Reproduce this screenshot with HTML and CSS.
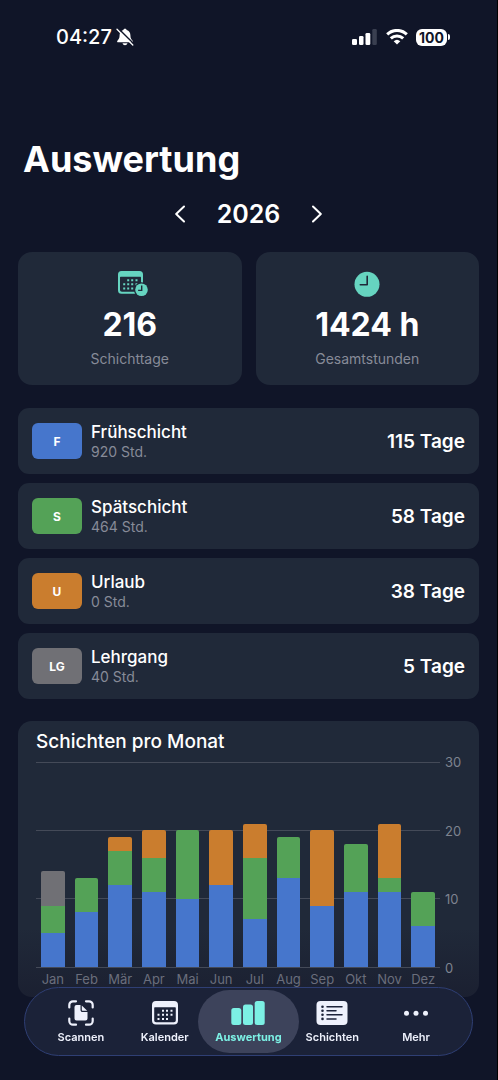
FILE: index.html
```html
<!DOCTYPE html>
<html lang="de">
<head>
<meta charset="utf-8">
<meta name="viewport" content="width=device-width, initial-scale=1">
<title>Auswertung</title>
<link rel="stylesheet" href="styles.css">
</head>
<body>
<div class="status">
  <div class="status-left">
    <span>04:27</span>
    <svg width="18" height="18" viewBox="0 0 18 18"><path d="M9 .8c.9 0 1.500.5 1.600 1.200C13.200 2.800 14.400 4.800 14.400 7.300c0 3.200.9 4 2 5.200.9 1 .5 1.800-.5 1.800H2.100c-1 0-1.400-.8-.5-1.800 1.100-1.200 2-2 2-5.200 0-2.500 1.200-4.500 3.800-5.300C7.500 1.300 8.100.8 9 .8zM6.500 15.300h5c-.4 1.200-1.300 1.900-2.500 1.900s-2.100-.7-2.500-1.900z" fill="#fff"/><path d="M2.400.6 18 16" stroke="#101528" stroke-width="1.500"/><path d="M1 1.200 16.800 17" stroke="#fff" stroke-width="1.300" stroke-linecap="round"/></svg>
  </div>
  <div class="status-right">
    <svg width="26" height="16" viewBox="0 0 26 16" fill="#fff"><rect x="0" y="10" width="5" height="6" rx="1.300"/><rect x="7" y="7" width="4.500" height="9" rx="1.300"/><rect x="13.500" y="4" width="4.800" height="12" rx="1.300"/><rect x="20.300" y="0" width="4.500" height="16" rx="1.300" fill="#3a3f50"/></svg>
    <svg width="22" height="16" viewBox="0 0 22 16" fill="none" stroke="#fff" stroke-width="3"><path d="M1.200 5.400a14 14 0 0 1 19.600 0"/><path d="M4.800 9.400a8.900 8.900 0 0 1 12.400 0"/><path d="M11 15.600 7.700 12.200a4.800 4.800 0 0 1 6.600 0z" fill="#fff" stroke="none"/></svg>
    <div class="battery"><span class="battery-level">100</span><span class="battery-tip"></span></div>
  </div>
</div>
<main class="page">
  <h1 class="title">Auswertung</h1>
  <div class="year">
    <button class="year-step" aria-label="Vorheriges Jahr"><svg width="10" height="18" viewBox="0 0 10 18"><path d="M9 1.500 1.200 9 9 16.500"/></svg></button>
    <span class="year-value">2026</span>
    <button class="year-step" aria-label="Nächstes Jahr"><svg width="10" height="18" viewBox="0 0 10 18"><path d="M1 1.500 8.800 9 1 16.500"/></svg></button>
  </div>
  <section class="stats">
    <div class="stat">
      <svg width="36" height="26" viewBox="-6 0 36 26"><path fill="#66d4c0" fill-rule="evenodd" d="M3.500 0h18A3.500 3.500 0 0 1 25 3.500v15.700a3.500 3.500 0 0 1-3.500 3.500h-18A3.500 3.500 0 0 1 0 19.200V3.500A3.500 3.500 0 0 1 3.500 0zM2 6.800v12c0 1.300.7 2 2 2h17c1.300 0 2-.7 2-2v-12c0-.7-.3-1-1-1H3c-.7 0-1 .3-1 1z"/><path fill="#66d4c0" d="M9.200 8.300h2v2h-2zM13.200 8.300h2v2h-2zM17.500 8.300h2v2h-2zM5.200 12.300h2v2h-2zM9.200 12.300h2v2h-2zM13.200 12.300h2v2h-2zM17.500 12.300h2v2h-2zM5.200 16.500h2v2h-2zM9.200 16.500h2v2h-2zM13.200 16.500h2v2h-2z"/><circle cx="23.500" cy="18.800" r="7.500" fill="#202939"/><circle cx="23.500" cy="18.800" r="6.300" fill="#66d4c0"/><path d="M23.700 14.600v4.800h-3.600" fill="none" stroke="#202939" stroke-width="1.400"/></svg>
      <strong class="stat-value">216</strong>
      <span class="stat-label">Schichttage</span>
    </div>
    <div class="stat">
      <svg width="26" height="26" viewBox="0 0 26 26"><circle cx="13" cy="13.300" r="12.500" fill="#66d4c0"/><path d="M13.200 5.200v8.500H6.300" fill="none" stroke="#202939" stroke-width="1.600" stroke-linecap="round" stroke-linejoin="round"/></svg>
      <strong class="stat-value">1424 h</strong>
      <span class="stat-label">Gesamtstunden</span>
    </div>
  </section>
  <section class="shifts">
    <div class="shift"><span class="tag early">F</span><div class="shift-text"><span class="shift-name">Frühschicht</span><span class="shift-hours">920 Std.</span></div><span class="shift-days">115 Tage</span></div>
    <div class="shift"><span class="tag late">S</span><div class="shift-text"><span class="shift-name">Spätschicht</span><span class="shift-hours">464 Std.</span></div><span class="shift-days">58 Tage</span></div>
    <div class="shift"><span class="tag leave">U</span><div class="shift-text"><span class="shift-name">Urlaub</span><span class="shift-hours">0 Std.</span></div><span class="shift-days">38 Tage</span></div>
    <div class="shift"><span class="tag course">LG</span><div class="shift-text"><span class="shift-name">Lehrgang</span><span class="shift-hours">40 Std.</span></div><span class="shift-days">5 Tage</span></div>
  </section>
  <section class="chart-card">
    <h2 class="chart-title">Schichten pro Monat</h2>
    <div class="chart">
      <div class="plot">
        <div class="bar"><i class="course" style="height:16.667%"></i><i class="late" style="height:13.333%"></i><i class="early" style="height:16.667%"></i></div>
        <div class="bar"><i class="late" style="height:16.667%"></i><i class="early" style="height:26.667%"></i></div>
        <div class="bar"><i class="leave" style="height:6.667%"></i><i class="late" style="height:16.667%"></i><i class="early" style="height:40%"></i></div>
        <div class="bar"><i class="leave" style="height:13.333%"></i><i class="late" style="height:16.667%"></i><i class="early" style="height:36.667%"></i></div>
        <div class="bar"><i class="late" style="height:33.333%"></i><i class="early" style="height:33.333%"></i></div>
        <div class="bar"><i class="leave" style="height:26.667%"></i><i class="early" style="height:40%"></i></div>
        <div class="bar"><i class="leave" style="height:16.667%"></i><i class="late" style="height:30%"></i><i class="early" style="height:23.333%"></i></div>
        <div class="bar"><i class="late" style="height:20%"></i><i class="early" style="height:43.333%"></i></div>
        <div class="bar"><i class="leave" style="height:36.667%"></i><i class="early" style="height:30%"></i></div>
        <div class="bar"><i class="late" style="height:23.333%"></i><i class="early" style="height:36.667%"></i></div>
        <div class="bar"><i class="leave" style="height:26.667%"></i><i class="late" style="height:6.667%"></i><i class="early" style="height:36.667%"></i></div>
        <div class="bar"><i class="late" style="height:16.667%"></i><i class="early" style="height:20%"></i></div>
      </div>
      <div class="scale"><span>30</span><span>20</span><span>10</span><span>0</span></div>
      <div class="months"><span>Jan</span><span>Feb</span><span>Mär</span><span>Apr</span><span>Mai</span><span>Jun</span><span>Jul</span><span>Aug</span><span>Sep</span><span>Okt</span><span>Nov</span><span>Dez</span></div>
    </div>
  </section>
</main>
<nav class="tabs">
  <a class="tab" href="#scannen"><svg width="26" height="26" viewBox="0 0 26 26"><path d="M1.300 7.500V5a3.700 3.700 0 0 1 3.700-3.700h3M18 1.300h3A3.700 3.700 0 0 1 24.700 5v2.500M24.700 18.500V21a3.700 3.700 0 0 1-3.700 3.700h-3M8 24.700H5A3.700 3.700 0 0 1 1.300 21v-2.500" fill="none" stroke="#eef1fc" stroke-width="2.200" stroke-linecap="round"/><path d="M8.500 5h4v4.800c0 1.500.8 2.300 2.300 2.300h4.700v6.400a2 2 0 0 1-2 2H8.500a2 2 0 0 1-2-2V7a2 2 0 0 1 2-2zM13.800 5.400l5.400 5.400h-4.400c-.7 0-1-.3-1-1z" fill="#eef1fc"/></svg><span>Scannen</span></a>
  <a class="tab" href="#kalender"><svg width="26" height="26" viewBox="0 0 26 26"><path fill="#eef1fc" fill-rule="evenodd" d="M4 1h18a4 4 0 0 1 4 4v15.500a4 4 0 0 1-4 4H4a4 4 0 0 1-4-4V5a4 4 0 0 1 4-4zM2.200 8.200v12c0 1.300.7 2 2 2h17.600c1.300 0 2-.7 2-2v-12c0-.7-.3-1-1-1H3.200c-.7 0-1 .3-1 1z"/><path fill="#eef1fc" d="M10 9.700h2v2h-2zM14 9.700h2v2h-2zM18.500 9.700h2v2h-2zM5.500 13.700h2v2h-2zM10 13.700h2v2h-2zM14 13.700h2v2h-2zM18.500 13.700h2v2h-2zM5.500 17.900h2v2h-2zM10 17.900h2v2h-2zM14 17.900h2v2h-2z"/></svg><span>Kalender</span></a>
  <a class="tab active" href="#auswertung" aria-current="page"><svg width="34" height="26" viewBox="0 0 34 26" fill="#7cf0e4"><rect x=".3" y="8" width="10" height="17" rx="2.500"/><rect x="12" y="4.500" width="10" height="20.500" rx="2.500"/><rect x="23.700" y="1" width="10" height="24" rx="2.500"/></svg><span>Auswertung</span></a>
  <a class="tab" href="#schichten"><svg width="32" height="26" viewBox="0 0 32 26"><rect x=".5" y="1" width="31" height="24" rx="4" fill="#eef1fc"/><g stroke="#1c233a" stroke-width="1.500" stroke-linecap="round"><path d="M11 6.700h15M11 10.700h9M11 14.700h15M11 18.900h9"/></g><g fill="#1c233a"><circle cx="6.500" cy="6.700" r="1.300"/><circle cx="6.500" cy="10.700" r="1.300"/><circle cx="6.500" cy="14.700" r="1.300"/><circle cx="6.500" cy="18.900" r="1.300"/></g></svg><span>Schichten</span></a>
  <a class="tab" href="#mehr"><svg width="26" height="26" viewBox="0 0 26 26" fill="#eef1fc"><circle cx="3.500" cy="13.300" r="2.500"/><circle cx="13" cy="13.300" r="2.500"/><circle cx="22.500" cy="13.300" r="2.500"/></svg><span>Mehr</span></a>
</nav>
</body>
</html>
```
FILE: styles.css
```css
* { box-sizing: border-box; }
body {
  margin: 0;
  min-height: 100vh;
  background: #101528;
  border-right: 1px solid #000;
  color: #fff;
  font-family: Inter, "Liberation Sans", sans-serif;
}
svg { display: block; flex: none; }
.early { background: #4676cc; }
.late { background: #54a257; }
.leave { background: #ca7d2e; }
.course { background: #707075; }

.status {
  display: flex;
  justify-content: space-between;
  align-items: center;
  height: 74px;
  padding: 0 47px 0 56px;
}
.status-left { display: flex; align-items: center; gap: 4px; font-size: 20px; font-weight: 500; }
.status-right { display: flex; align-items: center; gap: 8px; }
.battery { display: flex; align-items: center; gap: 1px; }
.battery-level {
  padding: 0 3px;
  border-radius: 6px;
  background: #fff;
  color: #101528;
  font-size: 14px;
  font-weight: 700;
  line-height: 17px;
}
.battery-tip { width: 2px; height: 6px; border-radius: 0 2px 2px 0; background: #fff; }

.page { padding: 61px 18px 83px; }
.title { margin: 0 5px; font-size: 36px; line-height: 48px; font-weight: 700; }
.year { display: flex; justify-content: center; align-items: center; gap: 21px; height: 62px; }
.year-step { display: grid; place-items: center; width: 32px; height: 32px; padding: 0; border: 0; background: none; }
.year-step path { fill: none; stroke: #fff; stroke-width: 2; stroke-linecap: round; stroke-linejoin: round; }
.year-value { font-size: 25px; font-weight: 600; }

.stats { display: grid; grid-template-columns: 1fr 1fr; gap: 14px; margin-top: 7px; }
.stat {
  display: flex;
  flex-direction: column;
  align-items: center;
  padding: 19px 8px 15px;
  border-radius: 14px;
  background: #202939;
}
.stat-value { margin-top: 8px; font-size: 32px; line-height: 40px; font-weight: 700; }
.stat-label { margin-top: 3px; color: #878b98; font-size: 14px; line-height: 22px; }

.shifts { display: flex; flex-direction: column; gap: 9px; margin-top: 23px; }
.shift {
  display: flex;
  align-items: center;
  gap: 9px;
  height: 66px;
  padding: 0 14px;
  border-radius: 11px;
  background: #202939;
}
.tag { display: grid; place-items: center; width: 50px; height: 36px; border-radius: 6px; font-size: 12px; font-weight: 700; }
.shift-text { display: flex; flex: 1; flex-direction: column; }
.shift-name { font-size: 17px; line-height: 22px; font-weight: 500; }
.shift-hours { color: #878b98; font-size: 14px; line-height: 18px; }
.shift-days { font-size: 19px; font-weight: 600; }

.chart-card { margin-top: 22px; padding: 9px 18px; border-radius: 14px; background: linear-gradient(#202939 75%, #1b2031); }
.chart-title { margin: 0; font-size: 19px; line-height: 24px; font-weight: 500; }
.chart { display: grid; grid-template-columns: 1fr 16px; gap: 0 5px; margin-top: 8px; }
.plot {
  display: grid;
  grid-template-columns: repeat(12, 1fr);
  justify-items: center;
  height: 206px;
  border-bottom: 1px solid #444a58;
  background:
    linear-gradient(#444a58, #444a58) 0 0 / 100% 1px no-repeat,
    linear-gradient(#444a58, #444a58) 0 33.333% / 100% 1px no-repeat,
    linear-gradient(#444a58, #444a58) 0 66.667% / 100% 1px no-repeat;
}
.bar { display: flex; flex-direction: column; justify-content: flex-end; width: 71%; height: 100%; }
.bar i:first-child { border-radius: 2px 2px 0 0; }
.scale { display: flex; flex-direction: column; justify-content: space-between; margin: -8px 0; color: #7e8390; font-size: 13px; line-height: 16px; }
.months { display: grid; grid-template-columns: repeat(12, 1fr); padding-top: 2px; color: #6a6e7c; font-size: 13px; line-height: 18px; text-align: center; }

.tabs {
  position: fixed;
  right: 25px;
  bottom: 24px;
  left: 24px;
  display: grid;
  grid-template-columns: repeat(5, 1fr);
  padding: 2px 14px;
  height: 69px;
  border: 1px solid #2f3f74;
  border-radius: 35px;
  background: #1b2238;
}
.tab {
  display: flex;
  flex-direction: column;
  align-items: center;
  gap: 2px;
  margin: 0 -9px;
  padding-top: 10px;
  border-radius: 32px;
  color: #eef1fc;
  font-size: 11px;
  line-height: 18px;
  font-weight: 600;
  text-decoration: none;
}
.active { background: #3d435b; color: #7cf0e4; font-weight: 700; }
```
